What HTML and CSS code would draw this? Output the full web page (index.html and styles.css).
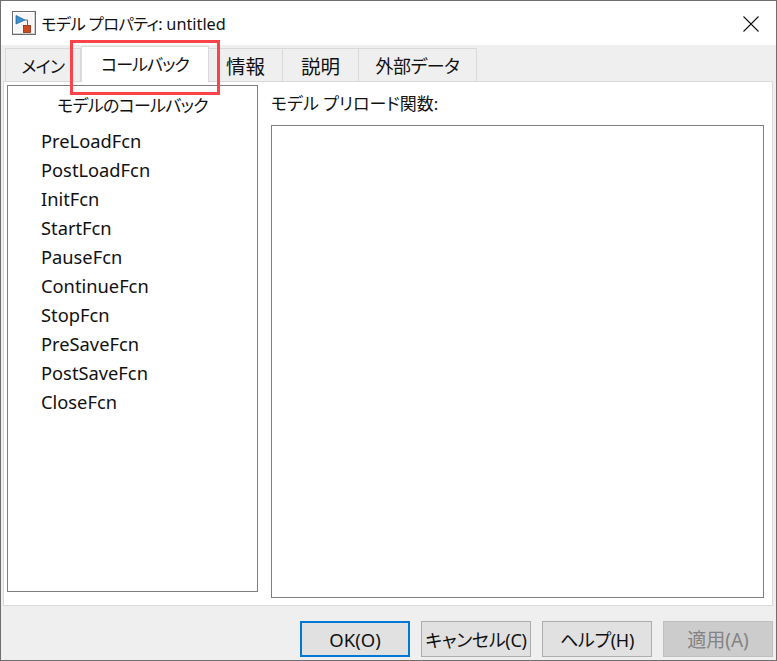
FILE: index.html
```html
<!DOCTYPE html>
<html lang="ja">
  <head>
    <meta charset="UTF-8" />
    <title>モデル プロパティ: untitled</title>
    <link rel="stylesheet" href="styles.css">
  </head>
  <body>
    <div class="dialog">
      <div class="titlebar">
        <svg class="app-icon" width="24" height="24" viewBox="0 0 24 24">
          <rect x="0.5" y="0.5" width="23" height="23" fill="#cfcfcf" stroke="#6b6b6b" />
          <rect x="1.5" y="1.5" width="20" height="20" fill="#f6f6f6" stroke="#ffffff" />
          <path d="M4 4.5 L13 9 L4 13 Z" fill="#3a8fce" stroke="#1d5f94" stroke-width="0.7" />
          <path d="M13 9 H15.5 V14" fill="none" stroke="#666" />
          <rect x="11.5" y="14.5" width="7" height="7" fill="#cf4a1e" stroke="#8c2c10" stroke-width="0.8" />
        </svg>
        <span class="title-text"><span class="title-jp">モデル プロパティ:</span> untitled</span>
        <svg class="close-icon" width="16" height="16" viewBox="0 0 16 16">
          <path d="M0.5 0.5 L15.5 15.5 M15.5 0.5 L0.5 15.5" stroke="#111" stroke-width="1.1" fill="none" />
        </svg>
      </div>

      <div class="tabs">
        <div class="tab tab-main">メイン</div>
        <div class="tab tab-callback active">コールバック</div>
        <div class="tab tab-info">情報</div>
        <div class="tab tab-desc">説明</div>
        <div class="tab tab-data">外部データ</div>
      </div>

      <div class="pane">
        <div class="callback-list">
          <div class="list-head">モデルのコールバック</div>
          <div class="list-item">PreLoadFcn</div>
          <div class="list-item">PostLoadFcn</div>
          <div class="list-item">InitFcn</div>
          <div class="list-item">StartFcn</div>
          <div class="list-item">PauseFcn</div>
          <div class="list-item">ContinueFcn</div>
          <div class="list-item">StopFcn</div>
          <div class="list-item">PreSaveFcn</div>
          <div class="list-item">PostSaveFcn</div>
          <div class="list-item">CloseFcn</div>
        </div>
        <div class="editor">
          <div class="editor-label">モデル プリロード関数:</div>
          <div class="editor-box"></div>
        </div>
      </div>

      <div class="buttons">
        <button class="btn btn-default">OK(O)</button>
        <button class="btn btn-kana">キャンセル(C)</button>
        <button class="btn btn-kana">ヘルプ(H)</button>
        <button class="btn btn-disabled">適用(A)</button>
      </div>

      <div class="highlight"></div>
    </div>
  </body>
</html>
```

FILE: styles.css
```css
* {
  margin: 0;
  padding: 0;
  box-sizing: border-box;
  font-family: "Noto Sans", "Noto Sans CJK JP", sans-serif;
  font-feature-settings: "palt";
}

body {
  width: 777px;
  height: 661px;
  overflow: hidden;
  background: #f0f0f0;
}

.dialog {
  position: relative;
  width: 777px;
  height: 661px;
  display: flex;
  flex-direction: column;
  background: #efefef;
  border: 1px solid #6e6e6e;
  color: #111;
  font-size: 17px;
}

.titlebar {
  height: 44px;
  flex-shrink: 0;
  display: flex;
  align-items: center;
  padding: 0 17px 0 11px;
  background: #fff;
  font-size: 16.3px;
}

.app-icon {
  margin-right: 5px;
}

.title-text {
  flex: 1;
}

.title-jp {
  letter-spacing: -0.6px;
}

.close-icon {
  margin-top: 1px;
}

.tabs {
  height: 36px;
  flex-shrink: 0;
  display: flex;
  align-items: flex-end;
  padding-left: 4px;
}

.tab {
  height: 33px;
  display: flex;
  align-items: center;
  justify-content: center;
  border: 1px solid #d9d9d9;
  border-bottom: none;
  border-left: none;
  background: #efefef;
  font-size: 17px;
  letter-spacing: -0.7px;
}

.tab-main {
  width: 76px;
  border-left: 1px solid #d9d9d9;
}

.tab-callback {
  width: 128px;
}

.tab-info {
  width: 74px;
  font-size: 19.5px;
  letter-spacing: 0;
}

.tab-desc {
  width: 76px;
  font-size: 19.5px;
  letter-spacing: 0;
}

.tab-data {
  width: 118px;
  font-size: 18px;
  letter-spacing: -0.5px;
}

.tab.active {
  height: 36px;
  margin-bottom: -1px;
  padding-bottom: 2px;
  background: #fff;
  border-left: 1px solid #d9d9d9;
  position: relative;
  z-index: 1;
  letter-spacing: -1px;
}

.pane {
  height: 525px;
  flex-shrink: 0;
  margin: 0 3px 0 2px;
  display: flex;
  background: #fff;
  border: 1px solid #d9d9d9;
  padding: 3px 8px 7px 3px;
}

.callback-list {
  width: 251px;
  height: 507px;
  flex-shrink: 0;
  border: 1px solid #7f7f7f;
  margin-right: 13px;
}

.list-head {
  text-align: center;
  height: 41px;
  line-height: 40px;
  font-size: 17px;
  letter-spacing: -0.7px;
}

.list-item {
  height: 29px;
  line-height: 28px;
  padding-left: 33px;
  font-size: 18.3px;
}

.editor {
  flex: 1;
  display: flex;
  flex-direction: column;
}

.editor-label {
  height: 40px;
  line-height: 38px;
  font-size: 17px;
}

.editor-box {
  flex: 1;
  border: 1px solid #7f7f7f;
  background: #fff;
}

.buttons {
  flex: 1;
  display: flex;
  justify-content: flex-end;
  align-items: flex-start;
  gap: 11px;
  padding: 15px 3px 0 0;
}

.btn {
  width: 110px;
  height: 36px;
  padding: 0;
  white-space: nowrap;
  background: #e1e1e1;
  border: 1px solid #adadad;
  color: #111;
  font-size: 18.5px;
}

.btn-kana {
  font-size: 18px;
  letter-spacing: -0.3px;
}

.btn-default {
  border: 2px solid #0078d7;
}

.btn-disabled {
  background: #cccccc;
  border-color: #bfbfbf;
  color: #838383;
  font-size: 19px;
}

/* red annotation box around the callback tab */
.highlight {
  position: absolute;
  left: 69px;
  top: 39px;
  width: 150px;
  height: 55px;
  border: 3px solid #fb4349;
  z-index: 2;
}
```
